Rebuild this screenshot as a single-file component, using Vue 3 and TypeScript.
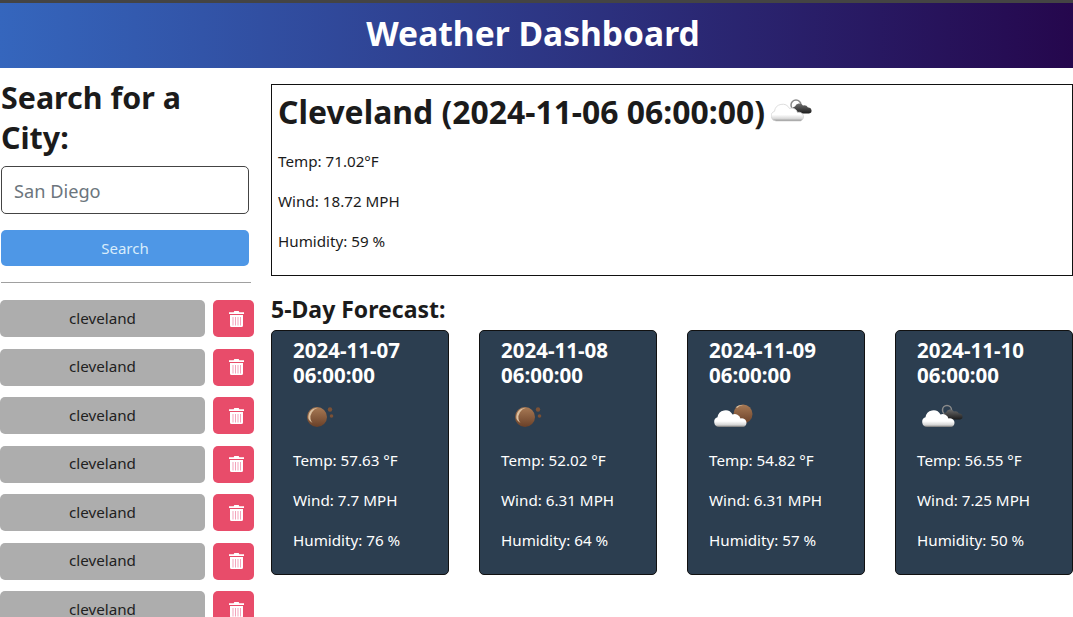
<script setup lang="ts">
interface Day {
  date: string
  time: string
  icon: 'moon' | 'partly' | 'cloudy'
  temp: string
  wind: string
  humidity: string
}

const days: Day[] = [
  { date: '2024-11-07', time: '06:00:00', icon: 'moon', temp: '57.63', wind: '7.7', humidity: '76' },
  { date: '2024-11-08', time: '06:00:00', icon: 'moon', temp: '52.02', wind: '6.31', humidity: '64' },
  { date: '2024-11-09', time: '06:00:00', icon: 'partly', temp: '54.82', wind: '6.31', humidity: '57' },
  { date: '2024-11-10', time: '06:00:00', icon: 'cloudy', temp: '56.55', wind: '7.25', humidity: '50' },
]

const history: string[] = Array(7).fill('cleveland')

const cloud = 'M5 19A5 5 0 0 1 3.500 9.300A8 8 0 0 1 18.500 6.500A6 6 0 0 1 26.500 10.500A4.500 4.500 0 0 1 29.500 19Z'
const darkCloud = 'M3.500 10.500A3.500 3.500 0 0 1 3 3.600A4.500 4.500 0 0 1 11 2.500A4.500 4.500 0 0 1 16 4.500A3 3 0 0 1 17 10.500Z'
</script>

<template>
  <header class="top">
    <h1>Weather Dashboard</h1>
  </header>

  <div class="layout">
    <aside class="side">
      <h2 class="side-title">Search for a City:</h2>
      <input class="city-input" type="text" placeholder="San Diego" />
      <button class="search-btn">Search</button>
      <hr class="divider" />
      <div v-for="(city, i) in history" :key="i" class="history-row">
        <button class="city-btn">{{ city }}</button>
        <button class="del-btn" aria-label="Delete">
          <svg width="15" height="16" viewBox="0 0 15 16">
            <path d="M5.300 0h4.400l.6 1.200H15v1.800H0V1.200h4.700z" fill="#fff" />
            <path fill="#fff" d="M1 4h13v10.500a1.500 1.500 0 0 1-1.500 1.500h-10A1.500 1.500 0 0 1 1 14.500z" />
            <path stroke="#f3a3bb" stroke-width="1" d="M4 6v8.500M6.500 6v8.500M9 6v8.500M11.500 6v8.500" />
          </svg>
        </button>
      </div>
    </aside>

    <main class="content">
      <section class="today">
        <h2 class="today-title">
          Cleveland (2024-11-06 06:00:00)
          <svg class="today-icon" width="44" height="30" viewBox="0 0 44 30">
            <defs>
              <linearGradient id="cloudWhite" x1="0" y1="0" x2="0" y2="1">
                <stop offset="0.62" stop-color="#ffffff" />
                <stop offset="0.88" stop-color="#d4d4d4" />
                <stop offset="1" stop-color="#7a7a7a" />
              </linearGradient>
              <linearGradient id="cloudDark" x1="0" y1="0" x2="0" y2="1">
                <stop offset="0" stop-color="#707070" />
                <stop offset="1" stop-color="#1c1c1c" />
              </linearGradient>
            </defs>
            <circle cx="25" cy="8" r="5" fill="none" stroke="#8a8a8a" stroke-width="1.500" />
            <path :d="darkCloud" fill="url(#cloudDark)" transform="translate(21 6)" />
            <path :d="cloud" fill="url(#cloudWhite)" stroke="#d6d6d6" stroke-width="0.800" transform="translate(0 5)" />
          </svg>
        </h2>
        <p>Temp: 71.02°F</p>
        <p>Wind: 18.72 MPH</p>
        <p>Humidity: 59 %</p>
      </section>

      <h3 class="forecast-title">5-Day Forecast:</h3>

      <div class="cards">
        <article v-for="d in days" :key="d.date" class="card">
          <div class="card-date">{{ d.date }}<br />{{ d.time }}</div>
          <svg class="card-icon" width="50" height="40" viewBox="0 0 50 40">
            <defs>
              <linearGradient id="moonFill" x1="0" y1="0" x2="0" y2="1">
                <stop offset="0" stop-color="#a87a55" />
                <stop offset="1" stop-color="#6a4028" />
              </linearGradient>
              <linearGradient id="cardCloud" x1="0" y1="0" x2="0" y2="1">
                <stop offset="0.65" stop-color="#ffffff" />
                <stop offset="0.88" stop-color="#d4d4d4" />
                <stop offset="1" stop-color="#707070" />
              </linearGradient>
              <linearGradient id="cardDark" x1="0" y1="0" x2="0" y2="1">
                <stop offset="0" stop-color="#6a6a6a" />
                <stop offset="1" stop-color="#1c1c1c" />
              </linearGradient>
            </defs>
            <template v-if="d.icon === 'moon'">
              <circle cx="26" cy="22" r="10" fill="url(#moonFill)" />
              <path d="M17.500 24a9 9 0 0 1 9-11a10 10 0 0 0-7 11a9 9 0 0 0 2 4a9 9 0 0 1-4-4z" fill="#dcc0a0" />
              <circle cx="39" cy="14.500" r="2.200" fill="#7b5136" />
              <circle cx="40.500" cy="21" r="1.800" fill="#7b5136" />
            </template>
            <template v-else-if="d.icon === 'partly'">
              <circle cx="36" cy="19" r="9.500" fill="url(#moonFill)" />
              <path d="M29 12a9 9 0 0 1 7-2a9 9 0 0 0-6 3z" fill="#dcc0a0" />
              <path :d="cloud" fill="url(#cardCloud)" transform="translate(7 13)" />
            </template>
            <template v-else>
              <circle cx="32" cy="15" r="4.500" fill="none" stroke="#8a8a8a" stroke-width="1.500" />
              <path :d="darkCloud" fill="url(#cardDark)" transform="translate(28 14)" />
              <path :d="cloud" fill="url(#cardCloud)" transform="translate(7 13)" />
            </template>
          </svg>
          <p>Temp: {{ d.temp }} °F</p>
          <p>Wind: {{ d.wind }} MPH</p>
          <p>Humidity: {{ d.humidity }} %</p>
        </article>
      </div>
    </main>
  </div>
</template>

<style>
html,
body {
  overflow: hidden;
}
</style>

<style scoped>
h1, h2, h3, p {
  margin: 0;
}

.top {
  height: 60px;
  padding: 0 7px 5px 0;
  border-top: 3px solid #444;
  background: linear-gradient(to right, #3566bd, #25074d);
  display: flex;
  align-items: center;
  justify-content: center;
  font-family: "Noto Sans", sans-serif;
}

.top h1 {
  font-size: 33.600px;
  font-weight: 700;
  color: #fff;
}

.layout {
  display: flex;
  align-items: flex-start;
  gap: 17px;
  color: #1b1b1b;
  font-family: "Noto Sans", sans-serif;
}

/* sidebar */
.side {
  width: 254px;
  flex-shrink: 0;
  padding-top: 10px;
}

.side-title {
  font-size: 30.400px;
  line-height: 40px;
  font-weight: 700;
  margin-left: 1px;
  width: 230px;
}

.city-input {
  display: block;
  box-sizing: border-box;
  width: 248px;
  height: 48px;
  margin: 8px 0 16px 1px;
  padding: 2px 12px 0;
  border: 1px solid #444;
  border-radius: 5px;
  font-family: inherit;
  font-size: 18.200px;
  outline: none;
}

.city-input::placeholder {
  color: #6c757d;
}

.search-btn {
  display: block;
  width: 248px;
  height: 36px;
  margin-left: 1px;
  border: none;
  border-radius: 5px;
  background: #4e97e6;
  color: #d8ecfb;
  font-family: inherit;
  font-size: 15px;
}

.divider {
  width: 250px;
  height: 0;
  margin: 16px 0 17px 1px;
  border: none;
  border-top: 1px solid #a0a0a0;
}

.history-row {
  display: flex;
  gap: 8px;
  height: 37px;
  margin-bottom: 11.500px;
}

.city-btn {
  width: 205px;
  border: none;
  border-radius: 5px;
  background: #adadad;
  color: #212121;
  font-family: inherit;
  font-size: 15.200px;
  padding: 0 0 2px;
}

.del-btn {
  width: 41px;
  border: none;
  border-radius: 5px;
  background: #e84c6a;
  display: flex;
  align-items: center;
  justify-content: center;
  padding: 0 0 0 6px;
}

/* main */
.content {
  flex: 1;
  min-width: 0;
  padding-top: 16px;
}

.today {
  box-sizing: border-box;
  height: 192px;
  border: 1px solid #111;
  padding: 5px 6px;
  font-size: 15.200px;
}

.today-title {
  display: flex;
  align-items: center;
  gap: 6px;
  font-size: 31.900px;
  line-height: 44px;
  font-weight: 700;
  margin-bottom: 17px;
}

.today p,
.card p {
  line-height: 20px;
  margin-bottom: 20px;
}

.forecast-title {
  font-size: 23px;
  line-height: 30px;
  font-weight: 700;
  margin-top: 18px;
  margin-bottom: 6px;
}

.cards {
  display: flex;
  gap: 30px;
}

.card {
  box-sizing: border-box;
  width: 178px;
  height: 245px;
  border: 1px solid #111;
  border-radius: 5px;
  background: #2c3e50;
  color: #fff;
  padding: 7px 21px;
  font-size: 15.200px;
}

.card-date {
  font-size: 20.500px;
  line-height: 25px;
  font-weight: 700;
}

.card-icon {
  display: block;
  margin: 7px 0 15px -2px;
}
</style>
